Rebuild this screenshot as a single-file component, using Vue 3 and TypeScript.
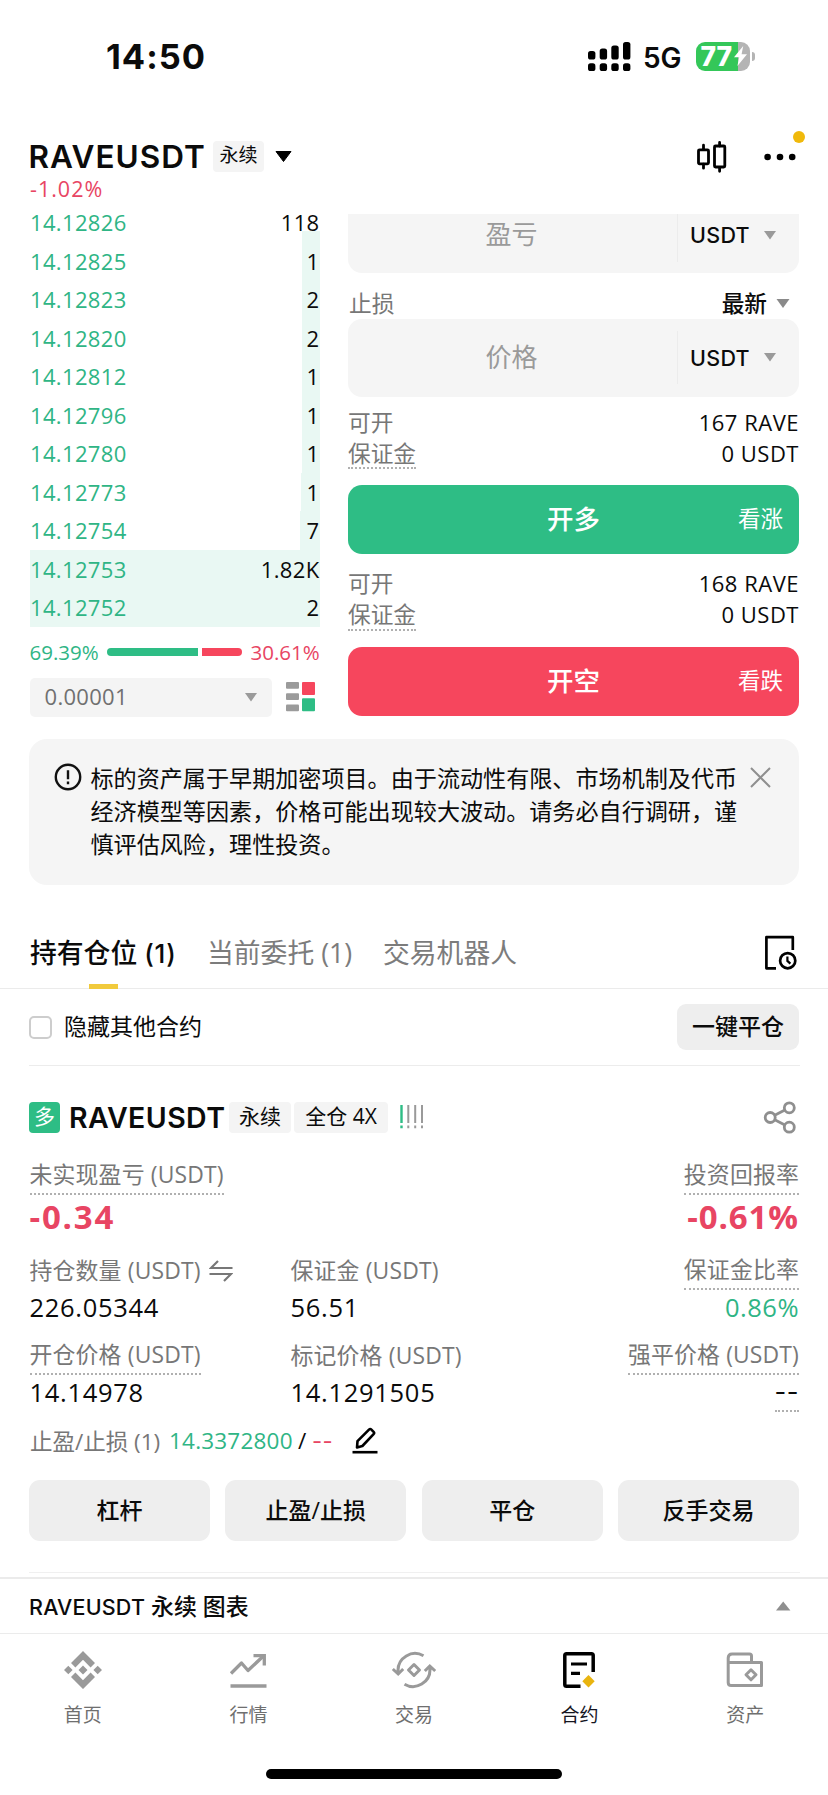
<script setup lang="ts">
interface Bid {
  price: string
  size: string
  depth: number
}

const bids: Bid[] = [
  { price: '14.12826', size: '118', depth: 18 },
  { price: '14.12825', size: '1', depth: 18 },
  { price: '14.12823', size: '2', depth: 18 },
  { price: '14.12820', size: '2', depth: 18 },
  { price: '14.12812', size: '1', depth: 18 },
  { price: '14.12796', size: '1', depth: 18 },
  { price: '14.12780', size: '1', depth: 18 },
  { price: '14.12773', size: '1', depth: 18.5 },
  { price: '14.12754', size: '7', depth: 20 },
  { price: '14.12753', size: '1.82K', depth: 290 },
  { price: '14.12752', size: '2', depth: 290 },
]

const sides = [
  { kind: 'long', max: '167 RAVE', cost: '0 USDT', action: '开多', hint: '看涨' },
  { kind: 'short', max: '168 RAVE', cost: '0 USDT', action: '开空', hint: '看跌' },
]

const notice = [
  '标的资产属于早期加密项目。由于流动性有限、市场机制及代币',
  '经济模型等因素，价格可能出现较大波动。请务必自行调研，谨',
  '慎评估风险，理性投资。',
]

const actions = ['杠杆', '止盈/止损', '平仓', '反手交易']
</script>

<template>
  <div class="screen">
    <div class="status">
      <span class="clock">14:50</span>
      <div class="status-right">
        <svg class="signal" width="43" height="30" viewBox="0 0 43 30">
          <rect x="0" y="9" width="7.4" height="8.5" rx="2.6" />
          <rect x="11.7" y="6.5" width="7.4" height="11" rx="2.6" />
          <rect x="23.3" y="3.5" width="7.4" height="14" rx="2.6" />
          <rect x="35" y="0" width="7.4" height="17.5" rx="2.6" />
          <rect x="0" y="21.3" width="7.4" height="7.7" rx="2.6" />
          <rect x="11.7" y="21.3" width="7.4" height="7.7" rx="2.6" />
          <rect x="23.3" y="21.3" width="7.4" height="7.7" rx="2.6" />
          <rect x="35" y="21.3" width="7.4" height="7.7" rx="2.6" />
        </svg>
        <span class="net">5G</span>
        <div class="battery">
          <div class="cell">
            <span>77</span>
            <svg width="13" height="20" viewBox="0 0 13 20"><path d="M9.2 0 0 11.2h5.2L3.4 20 13 8.2H7.6z" fill="#fff" /></svg>
          </div>
          <i class="tip"></i>
        </div>
      </div>
    </div>

    <header class="head">
      <div class="head-row">
        <h1>RAVEUSDT</h1>
        <span class="tag tag-top">永续</span>
        <svg class="drop" width="17" height="11" viewBox="0 0 17 11"><path d="M1 .5h15L8.5 10.5z" stroke="#000" stroke-linejoin="round" /></svg>
        <div class="head-icons">
          <svg width="30" height="32" viewBox="0 0 30 32" fill="none" stroke="#000" stroke-width="2.8" stroke-linecap="round">
            <rect x="1.5" y="8.8" width="10" height="14" rx="1" />
            <path d="M6.5 4.2v4M6.5 23.2v4" />
            <rect x="17.5" y="5" width="10.3" height="21" rx="1" />
            <path d="M22.6 1.5V5M22.6 26.3v4" />
          </svg>
          <div class="more">
            <svg width="32" height="8" viewBox="0 0 32 8"><circle cx="3.6" cy="4" r="3.3" /><circle cx="16" cy="4" r="3.3" /><circle cx="28.2" cy="4" r="3.3" /></svg>
            <i class="unread"></i>
          </div>
        </div>
      </div>
      <div class="change">-1.02%</div>
    </header>

    <main class="trade">
      <section class="left">
        <div class="book">
          <div v-for="b in bids" :key="b.price" class="bid">
            <i class="depth" :style="{ width: b.depth + 'px' }"></i>
            <span class="price">{{ b.price }}</span>
            <span class="size">{{ b.size }}</span>
          </div>
        </div>
        <div class="ratio">
          <span class="up">69.39%</span>
          <i class="bar bar-up"></i>
          <i class="bar bar-down"></i>
          <span class="down">30.61%</span>
        </div>
        <div class="precision">
          <div class="select">
            <span>0.00001</span>
            <svg width="12" height="9" viewBox="0 0 12 9"><path d="M0 0h12L6 8.6z" fill="#9a9a9a" /></svg>
          </div>
          <svg class="layout" width="30" height="30" viewBox="0 0 30 30">
            <g fill="#9b9b9b"><rect y="0" width="13" height="6.7" rx="1" /><rect y="11.3" width="13" height="6.7" rx="1" /><rect y="22.6" width="13" height="6.7" rx="1" /></g>
            <rect x="16" width="13" height="13" rx="1" fill="#f6465d" />
            <rect x="16" y="16.3" width="13" height="13" rx="1" fill="#2ebd85" />
          </svg>
        </div>
      </section>

      <section class="right">
        <div class="clip">
          <div class="field field-cut">
            <span class="ph">盈亏</span>
            <div class="unit"><b>USDT</b><svg width="12" height="9" viewBox="0 0 12 9"><path d="M0 0h12L6 8.6z" fill="#9a9a9a" /></svg></div>
          </div>
        </div>
        <div class="stop">
          <span>止损</span>
          <div class="latest"><b>最新</b><svg width="14" height="9" viewBox="0 0 14 9"><path d="M.5 0h13L7 9z" fill="#8a8a8a" /></svg></div>
        </div>
        <div class="field">
          <span class="ph">价格</span>
          <div class="unit"><b>USDT</b><svg width="12" height="9" viewBox="0 0 12 9"><path d="M0 0h12L6 8.6z" fill="#9a9a9a" /></svg></div>
        </div>
        <template v-for="s in sides" :key="s.kind">
          <div class="info" :class="s.kind">
            <div class="info-row"><span>可开</span><em>{{ s.max }}</em></div>
            <div class="info-row"><span class="dotted">保证金</span><em>{{ s.cost }}</em></div>
          </div>
          <button class="order" :class="s.kind">
            <b>{{ s.action }}</b>
            <span>{{ s.hint }}</span>
          </button>
        </template>
      </section>
    </main>

    <aside class="notice">
      <svg class="warn" width="28" height="28" viewBox="0 0 28 28" fill="none" stroke="#111" stroke-width="2.4">
        <circle cx="14" cy="14" r="12.2" />
        <path d="M14 7.2v9M14 18.4v2.8" />
      </svg>
      <div class="notice-text"><p v-for="line in notice" :key="line">{{ line }}</p></div>
      <svg class="close" width="21" height="21" viewBox="0 0 21 21" stroke="#8f8f8f" stroke-width="2"><path d="M1 1l19 19M20 1 1 20" /></svg>
    </aside>

    <nav class="tabs">
      <span class="tab active">持有仓位 <b>(1)</b></span>
      <span class="tab">当前委托 (1)</span>
      <span class="tab">交易机器人</span>
      <svg class="history" width="34" height="36" viewBox="0 0 34 36" fill="none" stroke="#000" stroke-width="2.7">
        <path d="M12 33.3H2.4V2.2h26.4V15" stroke-linejoin="round" />
        <circle cx="23.7" cy="25.7" r="7.6" />
        <path d="M23.4 21.6v4.3l3 2.7" stroke-width="2.2" />
      </svg>
    </nav>

    <div class="filter">
      <i class="check"></i>
      <span class="filter-label">隐藏其他合约</span>
      <button class="close-all">一键平仓</button>
    </div>

    <section class="position">
      <div class="pos-head">
        <span class="badge">多</span>
        <h2>RAVEUSDT</h2>
        <span class="tag tag-a">永续</span>
        <span class="tag tag-b">全仓 4X</span>
        <svg class="risk" width="24" height="24" viewBox="0 0 24 24" fill="none" stroke-width="2">
          <path d="M1.5 0v18M1.5 20.5v2.8" stroke="#2ebd85" stroke-width="2.4" />
          <path d="M8.3 0v18M8.3 20.5v2.8M15.2 0v18M15.2 20.5v2.8M22 0v18M22 20.5v2.8" stroke="#9a9a9a" />
        </svg>
        <svg class="share" width="33" height="33" viewBox="0 0 33 33" fill="none" stroke="#8f8f8f" stroke-width="2.8">
          <circle cx="7.2" cy="16.5" r="5" /><circle cx="26.3" cy="6.8" r="5" /><circle cx="26.3" cy="26.2" r="5" />
          <path d="M11.7 14.2l10.2-5.1M11.7 18.8l10.2 5.1" />
        </svg>
      </div>

      <div class="cells pnl">
        <div class="cell-box">
          <span class="lab dotted">未实现盈亏 (USDT)</span>
          <strong>-0.34</strong>
        </div>
        <div class="cell-box end">
          <span class="lab dotted">投资回报率</span>
          <strong class="roi">-0.61%</strong>
        </div>
      </div>
      <div class="cells three r2">
        <div class="cell-box">
          <span class="lab">持仓数量 (USDT)
            <svg class="swap" width="24" height="22" viewBox="0 0 24 22" fill="none" stroke="#777" stroke-width="2.2"><path d="M23.5 8H2L9 1M.5 14H22l-7 7" /></svg>
          </span>
          <span class="val">226.05344</span>
        </div>
        <div class="cell-box">
          <span class="lab">保证金 (USDT)</span>
          <span class="val">56.51</span>
        </div>
        <div class="cell-box end">
          <span class="lab dotted">保证金比率</span>
          <span class="val up">0.86%</span>
        </div>
      </div>
      <div class="cells three r3">
        <div class="cell-box">
          <span class="lab dotted">开仓价格 (USDT)</span>
          <span class="val">14.14978</span>
        </div>
        <div class="cell-box">
          <span class="lab">标记价格 (USDT)</span>
          <span class="val">14.1291505</span>
        </div>
        <div class="cell-box end">
          <span class="lab dotted">强平价格 (USDT)</span>
          <span class="val dash dotted">--</span>
        </div>
      </div>

      <div class="tpsl">
        <span class="tp-label">止盈/止损 (1)</span>
        <span class="tp-val">14.3372800</span>
        <span class="slash">/</span>
        <span class="sl-val">--</span>
        <svg class="edit" width="26" height="27" viewBox="0 0 26 27" fill="none" stroke="#000" stroke-width="2.6">
          <path d="M5 20.5 5.5 14.2 17 2.6q1.2-1.2 2.4 0l2.2 2.2q1.2 1.2 0 2.4L10.4 19z" stroke-linejoin="round" />
          <path d="M.5 25.2h25" />
        </svg>
      </div>

      <div class="actions">
        <button v-for="a in actions" :key="a">{{ a }}</button>
      </div>
    </section>

    <div class="chart-bar">
      <span><b>RAVEUSDT</b> 永续 图表</span>
      <svg width="15" height="10" viewBox="0 0 15 10"><path d="M0 9.6h14.4L7.2.6z" fill="#8f8f8f" /></svg>
    </div>

    <footer class="dock">
      <div class="dock-item">
        <svg width="38" height="38" viewBox="0 0 38 38" fill="#9a9a9a">
          <path d="M19 0 31 12l-4.4 4.4L19 8.8l-7.6 7.6L7 12zM19 38 7 26l4.4-4.4L19 29.2l7.6-7.6L31 26zM4.3 14.7 8.6 19l-4.3 4.3L0 19zM33.7 14.7 38 19l-4.3 4.3L29.4 19zM19 14.5 23.5 19 19 23.5 14.5 19z" />
        </svg>
        <span>首页</span>
      </div>
      <div class="dock-item">
        <svg width="38" height="38" viewBox="0 0 38 38" fill="none" stroke="#9a9a9a" stroke-width="3.3">
          <path d="M2 22.5 12.5 12l6.5 7.5L35 4.5" stroke-linejoin="round" /><path d="M24.5 4.7H35.3V14.5M1.5 35h36" />
        </svg>
        <span>行情</span>
      </div>
      <div class="dock-item">
        <svg width="46" height="38" viewBox="0 0 46 38" fill="none" stroke="#9a9a9a" stroke-width="3">
          <path d="M32.5 4.8A17 17 0 0 0 7 20v3M1.8 18l5.4 5 5-5M13.5 33.2A17 17 0 0 0 39 18v-3M33.8 20l5-5 5.4 5" />
          <path d="M23 13.5 28.5 19 23 24.5 17.5 19z" stroke-linejoin="round" />
        </svg>
        <span>交易</span>
      </div>
      <div class="dock-item on">
        <svg width="38" height="38" viewBox="0 0 38 38" fill="none" stroke="#000" stroke-width="3.5">
          <path d="M19.5 35.2H5.6q-1.8 0-1.8-1.8V4.6q0-1.8 1.8-1.8H30.4q1.8 0 1.8 1.8V21" /><path d="M10 13H26M10 22.3h9" stroke-width="3.2" />
          <path d="M27.5 24 33.7 30.2 27.5 36.4 21.3 30.2z" fill="#e9b40f" stroke="none" />
        </svg>
        <span>合约</span>
      </div>
      <div class="dock-item">
        <svg width="38" height="38" viewBox="0 0 38 38" fill="none" stroke="#9a9a9a" stroke-width="3" stroke-linejoin="round">
          <path d="M25.5 11.5V5q0-2-2-2H6Q2.2 3 2.2 7v24.5q0 3 3 3H35.5V11.5H2.2" />
          <path d="M25 18.8 30 23.8 25 28.8 20 23.8z" />
        </svg>
        <span>资产</span>
      </div>
    </footer>
    <div class="home"></div>
  </div>
</template>

<style>
body {
  margin: 0;
  background: #fff;
}
</style>

<style scoped>
.screen {
  width: 828px;
  height: 1795px;
  overflow: hidden;
  background: #fff;
  color: #0b0b0b;
  font-family: 'Open Sans', 'Noto Sans CJK SC', sans-serif;
  display: flex;
  flex-direction: column;
}
.screen > * {
  flex: none;
  box-sizing: border-box;
}
svg {
  display: block;
  flex: none;
}
h1, h2, p {
  margin: 0;
}
h1, h2, b {
  font-family: Inter, 'Noto Sans CJK SC', sans-serif;
}
b {
  font-weight: 500;
}
button {
  border: 0;
  padding: 0;
  font: inherit;
  color: inherit;
}
.status {
  height: 114px;
  padding: 0 73px 0 106px;
  display: flex;
  align-items: center;
  justify-content: space-between;
  font-family: Inter, sans-serif;
}
.clock {
  font-size: 34.5px;
  font-weight: 700;
  letter-spacing: 1px;
  line-height: 40px;
}
.status-right {
  display: flex;
  align-items: center;
}
.signal {
  margin-right: 12px;
}
.net {
  font-size: 28px;
  font-weight: 600;
  letter-spacing: -0.1px;
  width: 39px;
  margin-right: 14px;
  padding-top: 1px;
}
.battery {
  display: flex;
  align-items: center;
  padding-bottom: 2px;
}
.cell {
  width: 54px;
  height: 29px;
  border-radius: 9px;
  background: linear-gradient(90deg, #34c759 77%, #b4b4b4 77%);
  display: flex;
  align-items: center;
  padding-left: 4.5px;
  box-sizing: border-box;
  color: #fff;
}
.cell span {
  font-size: 26.5px;
  line-height: 29px;
  font-weight: 800;
  width: 33px;
  letter-spacing: -0.2px;
}
.tip {
  width: 3px;
  height: 9px;
  margin-left: 2px;
  border-radius: 0 3px 3px 0;
  background: #b4b4b4;
}

.head {
  height: 100px;
  padding: 27px 30px 0;
}
.head-row {
  height: 31px;
  display: flex;
  align-items: center;
}
h1 {
  margin-left: -1.5px;
  width: 184.5px;
  font-size: 31.5px;
  line-height: 31px;
  font-weight: 600;
  letter-spacing: 1px;
  white-space: nowrap;
}
.tag {
  background: #f4f4f4;
  border-radius: 4px;
  height: 31px;
  line-height: 29px;
  text-align: center;
  white-space: nowrap;
}
.tag-top {
  width: 51px;
  font-size: 19px;
}
.drop {
  margin-left: 11px;
}
.head-icons {
  margin-left: auto;
  display: flex;
  align-items: center;
}
.more {
  position: relative;
  margin: 0 2px 0 37px;
}
.unread {
  position: absolute;
  width: 12px;
  height: 12px;
  border-radius: 50%;
  background: #f0b90b;
  left: 29px;
  top: -22px;
}
.change {
  height: 35px;
  line-height: 33px;
  font-size: 21.5px;
  letter-spacing: 1px;
  color: #e84563;
}

.trade {
  display: flex;
  justify-content: space-between;
  padding: 0 29px 0 29.5px;
  height: 502px;
}
.left {
  width: 290px;
}
.book {
  margin-top: -11px;
}
.bid {
  height: 38.5px;
  position: relative;
  display: flex;
  align-items: center;
  justify-content: space-between;
  font-size: 22px;
  letter-spacing: 0.35px;
}
.depth {
  position: absolute;
  right: 0;
  top: 0;
  bottom: 0;
  background: #e9f8f3;
}
.bid:first-child .depth {
  top: 28px;
}
.price, .size {
  position: relative;
}
.price {
  color: #2fb585;
  padding-left: 0.5px;
}
.ratio {
  height: 51.5px;
  display: flex;
  align-items: center;
  font-size: 20.5px;
}
.up {
  color: #2fb585;
}
.down {
  color: #e84563;
}
.ratio .up, .ratio .down {
  width: 69px;
}
.ratio .down {
  text-align: right;
}
.bar {
  height: 8px;
}
.bar-up {
  width: 91px;
  margin-left: 8px;
  background: #2ebd85;
  border-radius: 4px 0 0 4px;
}
.bar-down {
  flex: 1;
  margin: 0 9px 0 4px;
  background: #f6465d;
  border-radius: 0 4px 4px 0;
}
.precision {
  display: flex;
  align-items: center;
}
.select {
  width: 242px;
  height: 38.5px;
  box-sizing: border-box;
  padding: 0 15px 0 15px;
  background: #f4f4f4;
  border-radius: 5px;
  display: flex;
  align-items: center;
  justify-content: space-between;
  font-size: 22px;
  letter-spacing: 0.3px;
  color: #707070;
}
.select span {
  padding-bottom: 2px;
}
.layout {
  margin-left: 14px;
}

.right {
  width: 451px;
}
.clip {
  height: 58.5px;
  overflow: hidden;
  display: flex;
  align-items: flex-end;
}
.field {
  width: 451px;
  height: 77.5px;
  flex: none;
  background: #f5f5f5;
  border-radius: 14px;
  display: flex;
  align-items: center;
}
.field-cut {
  height: 75px;
}
.ph {
  flex: 1;
  text-align: center;
  font-size: 26px;
  line-height: 36px;
  padding: 0 2px 2px 0;
  color: #9a9a9a;
}
.unit {
  width: 122px;
  height: 53px;
  box-sizing: border-box;
  border-left: 1.5px solid #ececec;
  padding: 0 23px 0 12px;
  display: flex;
  align-items: center;
  justify-content: space-between;
  font-size: 21.5px;
  letter-spacing: 0.3px;
}
.stop {
  height: 46.5px;
  box-sizing: border-box;
  padding: 15.5px 9px 0 1px;
  display: flex;
  justify-content: space-between;
  line-height: 31px;
  font-size: 22.7px;
  color: #777;
}
.latest {
  display: flex;
  align-items: center;
  gap: 9px;
  color: #0b0b0b;
}
.info.long {
  padding: 11px 0 15.5px;
}
.info.short {
  padding: 15px 0 16px;
}
.info-row {
  display: flex;
  justify-content: space-between;
  height: 31px;
  line-height: 30px;
  font-size: 22.7px;
  color: #777;
}
.info-row em {
  font-style: normal;
  font-size: 22px;
  line-height: 29px;
  letter-spacing: 0.5px;
  color: #0b0b0b;
}
.dotted {
  border-bottom: 2px dotted #b0b0b0;
}
.info-row .dotted {
  box-sizing: border-box;
  height: 30.5px;
}
.order {
  display: grid;
  grid-template-columns: 1fr auto 1fr;
  align-items: center;
  width: 451px;
  height: 69px;
  border-radius: 14px;
  color: #fff;
  padding: 0 16px 2px;
}
.order.long {
  background: #2ebd85;
}
.order.short {
  background: #f6465d;
}
.order b {
  grid-column: 2;
  font-size: 26.5px;
  line-height: 36px;
}
.order span {
  text-align: right;
  font-size: 22.5px;
  line-height: 36px;
}

.notice {
  margin: 23px 29px 0;
  height: 146px;
  border-radius: 18px;
  background: #f5f5f5;
  display: flex;
  padding: 24px 0 0 24.5px;
}
.notice-text {
  margin: -1px 0 0 9px;
  width: 648px;
  font-size: 23.1px;
  line-height: 33px;
  white-space: nowrap;
}
.close {
  margin: 4px 0 0 11px;
}
.tabs {
  height: 104px;
  border-bottom: 1.5px solid #ebebeb;
  padding: 36px 30px 0;
  display: flex;
  line-height: 63px;
  font-size: 26.8px;
  color: #7c7c7c;
  white-space: nowrap;
}
.tab {
  position: relative;
  height: 64px;
  width: 177px;
}
.tab.active {
  color: #0b0b0b;
  font-weight: 500;
}
.tab b {
  font-size: 26px;
  letter-spacing: 0.8px;
}
.tab + .tab {
  width: 176px;
}
.active::after {
  content: '';
  position: absolute;
  left: 59px;
  bottom: -3.5px;
  width: 29px;
  height: 4.5px;
  background: #f1ca3c;
}
.history {
  margin: 14px 0 0 auto;
}
.filter {
  height: 77px;
  margin: 0 28px 0 29px;
  border-bottom: 1.5px solid #ececec;
  display: flex;
  align-items: center;
  font-size: 23px;
}
.check {
  box-sizing: border-box;
  width: 23px;
  height: 23px;
  border: 2px solid #cdcdcd;
  border-radius: 5px;
}
.filter-label {
  margin-left: 12px;
  padding-bottom: 4px;
  flex: 1;
}
.close-all {
  width: 122px;
  height: 46px;
  margin-right: 1px;
  padding-bottom: 4px;
  border-radius: 9px;
  background: #eee;
  font-weight: 500;
}

.position {
  margin: 0 28px 0 29px;
  height: 507px;
  padding: 35.5px 1px 0 0;
  border-bottom: 1.5px solid #f0f0f0;
}
.pos-head {
  display: flex;
  align-items: center;
  height: 31px;
}
.badge {
  width: 31px;
  height: 31px;
  line-height: 29px;
  border-radius: 4px;
  text-align: center;
  font-size: 21px;
  background: #2ebd85;
  color: #fff;
}
h2 {
  margin-left: 9px;
  width: 160px;
  font-size: 28.5px;
  line-height: 31px;
  font-weight: 600;
  letter-spacing: 0.4px;
  white-space: nowrap;
}
.tag-a, .tag-b {
  font-size: 21px;
}
.tag-a {
  width: 62px;
}
.tag-b {
  width: 94px;
  margin-left: 3px;
}
.risk {
  margin-left: 12px;
}
.share {
  margin: 0 3px 0 auto;
}
.cells {
  display: grid;
  grid-template-columns: 1fr 1fr;
}
.three {
  grid-template-columns: 261px 1fr 1fr;
}
.cell-box {
  display: flex;
  flex-direction: column;
  align-items: flex-start;
  padding-left: 0.5px;
}
.end {
  align-items: flex-end;
}
.lab {
  height: 37px;
  box-sizing: border-box;
  line-height: 33px;
  padding-bottom: 2px;
  font-size: 22.9px;
  letter-spacing: 0.15px;
  color: #777;
  white-space: nowrap;
  display: flex;
  align-items: center;
}
.swap {
  margin-left: 8px;
}
.pnl {
  margin-top: 25.5px;
}
.r2, .r3 {
  margin-top: 13px;
}
strong {
  height: 45px;
  line-height: 43px;
  font-size: 33px;
  font-weight: 700;
  letter-spacing: 1.8px;
  color: #e84563;
}
.roi {
  letter-spacing: 0.9px;
}
.val {
  height: 35px;
  line-height: 34px;
  font-size: 25.5px;
  letter-spacing: 0.7px;
}
.val.up {
  letter-spacing: 0.5px;
}
.val.dash {
  font-family: Inter, sans-serif;
  letter-spacing: 0.5px;
}
.tpsl {
  height: 54px;
  margin-top: 1.5px;
  padding-left: 1px;
  display: flex;
  align-items: center;
  font-size: 22.5px;
  white-space: nowrap;
}
.tp-label {
  width: 139px;
  color: #777;
}
.tp-val {
  width: 129px;
  letter-spacing: 0.2px;
  color: #2fb585;
}
.slash {
  width: 14px;
}
.sl-val {
  width: 40px;
  font-family: Inter, sans-serif;
  font-size: 22px;
  letter-spacing: 0.3px;
  color: #e84563;
}
.actions {
  margin-top: 12px;
  display: grid;
  grid-template-columns: repeat(4, 1fr);
  gap: 15.5px;
}
.actions button {
  height: 61px;
  padding-bottom: 3px;
  border-radius: 11px;
  background: #eee;
  font-size: 23px;
  font-weight: 500;
}
.chart-bar {
  margin-top: 4px;
  height: 57px;
  border-top: 2px solid #ebebeb;
  border-bottom: 1px solid #ebebeb;
  padding: 0 37px 0 29px;
  display: flex;
  align-items: center;
  justify-content: space-between;
  font-size: 22.9px;
  font-weight: 500;
}
.chart-bar span {
  padding-bottom: 3px;
}
.chart-bar b {
  font-size: 21.5px;
  letter-spacing: 0.2px;
}
.dock {
  display: grid;
  grid-template-columns: repeat(5, 1fr);
  padding-top: 17px;
  height: 135px;
}
.dock-item {
  display: flex;
  flex-direction: column;
  align-items: center;
  font-size: 19px;
  color: #6f6f6f;
}
.dock-item span {
  margin-top: 12px;
  line-height: 28px;
}
.dock-item.on {
  color: #15151f;
}
.home {
  width: 296px;
  height: 10px;
  border-radius: 5px;
  background: #000;
  align-self: center;
}
</style>
